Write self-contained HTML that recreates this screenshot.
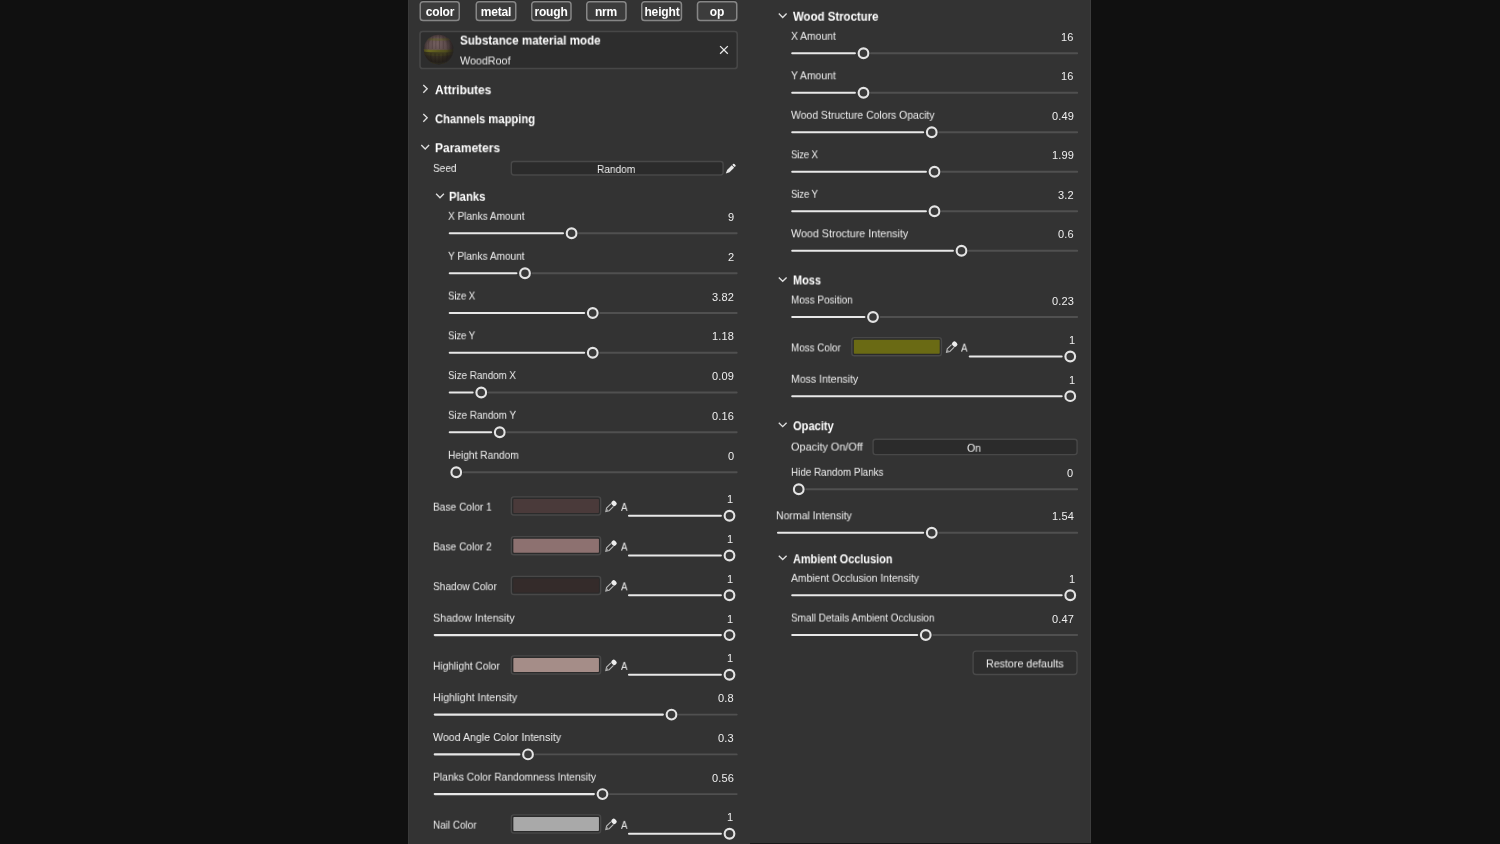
<!DOCTYPE html><html><head><meta charset="utf-8"><title>Substance material properties</title><style>

html,body{margin:0;padding:0;background:#101010;}
body{width:1500px;height:844px;position:relative;overflow:hidden;font-family:"Liberation Sans",sans-serif;font-size:11px;color:#efefef;}
#p{position:absolute;left:408px;top:0;width:683.3px;height:844px;background:#333333;box-shadow:inset 1px 0 0 #3a3a3a,inset -1px 0 0 #3d3d3d;}
#bl{position:absolute;left:750px;top:843px;width:341.3px;height:1px;background:#181818;}
.t{position:absolute;white-space:nowrap;transform-origin:0 50%;line-height:14px;height:14px;will-change:transform;}
.b{font-weight:bold;font-size:12px;color:#ffffff;}
.ic{position:absolute;overflow:visible;}
.tr{stroke:#505050;stroke-width:1.9;stroke-linecap:round;fill:none}
.fl{stroke:#e8e8e8;stroke-width:2.1;stroke-linecap:round;fill:none}
.hd{stroke:#e4e4e4;stroke-width:2.1;fill:#393939}
.ch{stroke:#dedede;stroke-width:1.35;fill:none}
.btn{stroke:#868686;stroke-width:1.5;fill:#3c3c3c}
.mt{stroke:#474747;stroke-width:1.6;fill:#2d2d2d}
.bx{stroke:#484848;stroke-width:1.4;fill:#2b2b2b}
.rb{stroke:#4a4a4a;stroke-width:1.3;fill:#2e2e2e}

</style></head><body><div id="p"></div><div id="bl"></div>
<svg class="ic" style="left:0;top:0" width="1500" height="844" viewBox="0 0 1500 844"><rect x="421.5" y="0" width="36.5" height="0.55" fill="#202020"/>
<rect class="btn" x="420.25" y="1.75" width="39.0" height="18.7" rx="2.8"/>
<rect x="477.5" y="0" width="37.0" height="0.55" fill="#202020"/>
<rect class="btn" x="476.25" y="1.75" width="39.5" height="18.7" rx="2.8"/>
<rect x="533" y="0" width="36.75" height="0.55" fill="#202020"/>
<rect class="btn" x="531.75" y="1.75" width="39.25" height="18.7" rx="2.8"/>
<rect x="588" y="0" width="36.75" height="0.55" fill="#202020"/>
<rect class="btn" x="586.75" y="1.75" width="39.25" height="18.7" rx="2.8"/>
<rect x="643" y="0" width="37.200000000000045" height="0.55" fill="#202020"/>
<rect class="btn" x="641.75" y="1.75" width="39.700000000000045" height="18.7" rx="2.8"/>
<rect x="698.75" y="0" width="36.75" height="0.55" fill="#202020"/>
<rect class="btn" x="697.5" y="1.75" width="39.25" height="18.7" rx="2.8"/>
<rect class="mt" x="420.00" y="31.50" width="317.20" height="37.00" rx="2.6"/>
<path d="M720.1 46.1l7.7 7.7m0 -7.7l-7.7 7.7" stroke="#e8e8e8" stroke-width="1.3" fill="none"/>
<path class="ch" d="M423.30 84.90l3.9 3.9l-3.9 3.9"/>
<path class="ch" d="M423.30 113.90l3.9 3.9l-3.9 3.9"/>
<path class="ch" d="M421.30 145.10l3.9 3.9l3.9 -3.9"/>
<rect class="bx" x="511.35" y="161.50" width="211.75" height="13.50" rx="2.4"/>
<g transform="translate(725.7 163.7) rotate(45 5 5)"><rect x="3.3" y="-0.9" width="3.4" height="2.1" rx="1" fill="#f0f0f0"/><path d="M3.3 1.8H6.7V8.4L5 11.9L3.3 8.4Z" fill="#e8e8e8"/></g>
<path class="ch" d="M436.10 193.80l3.9 3.9l3.9 -3.9"/>
<path class="tr" d="M579.10 233.25H736.70"/>
<path class="fl" d="M449.75 233.25H563.00"/>
<circle class="hd" cx="571.60" cy="233.25" r="4.85"/>
<path class="tr" d="M532.50 273.25H736.70"/>
<path class="fl" d="M449.75 273.25H516.40"/>
<circle class="hd" cx="525.00" cy="273.25" r="4.85"/>
<path class="tr" d="M600.25 313.00H736.70"/>
<path class="fl" d="M449.75 313.00H584.15"/>
<circle class="hd" cx="592.75" cy="313.00" r="4.85"/>
<path class="tr" d="M600.25 352.75H736.70"/>
<path class="fl" d="M449.75 352.75H584.15"/>
<circle class="hd" cx="592.75" cy="352.75" r="4.85"/>
<path class="tr" d="M488.75 392.50H736.70"/>
<path class="fl" d="M449.75 392.50H472.65"/>
<circle class="hd" cx="481.25" cy="392.50" r="4.85"/>
<path class="tr" d="M507.25 432.25H736.70"/>
<path class="fl" d="M449.75 432.25H491.15"/>
<circle class="hd" cx="499.75" cy="432.25" r="4.85"/>
<path class="tr" d="M463.75 472.25H736.70"/>
<circle class="hd" cx="456.25" cy="472.25" r="4.85"/>
<rect class="bx" x="511.35" y="496.90" width="89.30" height="18.10" rx="2.6"/>
<rect x="513.35" y="498.90" width="85.60" height="14.20" rx="0.8" fill="#4a3a3a"/>
<g transform="translate(604.20 501.10) rotate(45 6 6)"><rect x="3.3" y="-1.7" width="5.4" height="4.7" rx="2" fill="#ededed"/><path d="M4.15 3.2V9.3L6 12.2L7.85 9.3V3.2" fill="none" stroke="#b6b6b6" stroke-width="1.1"/><path d="M4.9 9.6L6 12L7.1 9.6Z" fill="#a4a4a4"/></g>
<path class="fl" d="M629.00 515.75H720.90"/>
<circle class="hd" cx="729.50" cy="515.75" r="4.85"/>
<rect class="bx" x="511.35" y="536.65" width="89.30" height="18.10" rx="2.6"/>
<rect x="513.35" y="538.65" width="85.60" height="14.20" rx="0.8" fill="#8d7170"/>
<g transform="translate(604.20 540.85) rotate(45 6 6)"><rect x="3.3" y="-1.7" width="5.4" height="4.7" rx="2" fill="#ededed"/><path d="M4.15 3.2V9.3L6 12.2L7.85 9.3V3.2" fill="none" stroke="#b6b6b6" stroke-width="1.1"/><path d="M4.9 9.6L6 12L7.1 9.6Z" fill="#a4a4a4"/></g>
<path class="fl" d="M629.00 555.50H720.90"/>
<circle class="hd" cx="729.50" cy="555.50" r="4.85"/>
<rect class="bx" x="511.35" y="576.40" width="89.30" height="18.10" rx="2.6"/>
<rect x="513.35" y="578.40" width="85.60" height="14.20" rx="0.8" fill="#342b2a"/>
<g transform="translate(604.20 580.60) rotate(45 6 6)"><rect x="3.3" y="-1.7" width="5.4" height="4.7" rx="2" fill="#ededed"/><path d="M4.15 3.2V9.3L6 12.2L7.85 9.3V3.2" fill="none" stroke="#b6b6b6" stroke-width="1.1"/><path d="M4.9 9.6L6 12L7.1 9.6Z" fill="#a4a4a4"/></g>
<path class="fl" d="M629.00 595.25H720.90"/>
<circle class="hd" cx="729.50" cy="595.25" r="4.85"/>
<path class="fl" d="M434.75 635.10H720.90"/>
<circle class="hd" cx="729.50" cy="635.10" r="4.85"/>
<rect class="bx" x="511.35" y="655.90" width="89.30" height="18.10" rx="2.6"/>
<rect x="513.35" y="657.90" width="85.60" height="14.20" rx="0.8" fill="#a58d88"/>
<g transform="translate(604.20 660.10) rotate(45 6 6)"><rect x="3.3" y="-1.7" width="5.4" height="4.7" rx="2" fill="#ededed"/><path d="M4.15 3.2V9.3L6 12.2L7.85 9.3V3.2" fill="none" stroke="#b6b6b6" stroke-width="1.1"/><path d="M4.9 9.6L6 12L7.1 9.6Z" fill="#a4a4a4"/></g>
<path class="fl" d="M629.00 674.75H720.90"/>
<circle class="hd" cx="729.50" cy="674.75" r="4.85"/>
<path class="tr" d="M679.00 714.60H736.70"/>
<path class="fl" d="M434.75 714.60H662.90"/>
<circle class="hd" cx="671.50" cy="714.60" r="4.85"/>
<path class="tr" d="M535.50 754.40H736.70"/>
<path class="fl" d="M434.75 754.40H519.40"/>
<circle class="hd" cx="528.00" cy="754.40" r="4.85"/>
<path class="tr" d="M610.00 794.10H736.70"/>
<path class="fl" d="M434.75 794.10H593.90"/>
<circle class="hd" cx="602.50" cy="794.10" r="4.85"/>
<rect class="bx" x="511.35" y="814.90" width="89.30" height="18.10" rx="2.6"/>
<rect x="513.35" y="816.90" width="85.60" height="14.20" rx="0.8" fill="#a9a9a9"/>
<g transform="translate(604.20 819.10) rotate(45 6 6)"><rect x="3.3" y="-1.7" width="5.4" height="4.7" rx="2" fill="#ededed"/><path d="M4.15 3.2V9.3L6 12.2L7.85 9.3V3.2" fill="none" stroke="#b6b6b6" stroke-width="1.1"/><path d="M4.9 9.6L6 12L7.1 9.6Z" fill="#a4a4a4"/></g>
<path class="fl" d="M629.00 833.75H720.90"/>
<circle class="hd" cx="729.50" cy="833.75" r="4.85"/>
<path class="ch" d="M778.80 13.60l3.9 3.9l3.9 -3.9"/>
<path class="tr" d="M871.00 53.25H1077.20"/>
<path class="fl" d="M792.25 53.25H854.90"/>
<circle class="hd" cx="863.50" cy="53.25" r="4.85"/>
<path class="tr" d="M871.00 92.75H1077.20"/>
<path class="fl" d="M792.25 92.75H854.90"/>
<circle class="hd" cx="863.50" cy="92.75" r="4.85"/>
<path class="tr" d="M939.25 132.25H1077.20"/>
<path class="fl" d="M792.25 132.25H923.15"/>
<circle class="hd" cx="931.75" cy="132.25" r="4.85"/>
<path class="tr" d="M942.00 171.75H1077.20"/>
<path class="fl" d="M792.25 171.75H925.90"/>
<circle class="hd" cx="934.50" cy="171.75" r="4.85"/>
<path class="tr" d="M942.00 211.25H1077.20"/>
<path class="fl" d="M792.25 211.25H925.90"/>
<circle class="hd" cx="934.50" cy="211.25" r="4.85"/>
<path class="tr" d="M969.00 250.75H1077.20"/>
<path class="fl" d="M792.25 250.75H952.90"/>
<circle class="hd" cx="961.50" cy="250.75" r="4.85"/>
<path class="ch" d="M778.80 277.40l3.9 3.9l3.9 -3.9"/>
<path class="tr" d="M880.50 317.00H1077.20"/>
<path class="fl" d="M792.25 317.00H864.40"/>
<circle class="hd" cx="873.00" cy="317.00" r="4.85"/>
<rect class="bx" x="851.85" y="337.65" width="89.55" height="18.10" rx="2.6"/>
<rect x="853.85" y="339.65" width="85.85" height="14.20" rx="0.8" fill="#6a6a14"/>
<g transform="translate(944.90 341.85) rotate(45 6 6)"><rect x="3.3" y="-1.7" width="5.4" height="4.7" rx="2" fill="#ededed"/><path d="M4.15 3.2V9.3L6 12.2L7.85 9.3V3.2" fill="none" stroke="#b6b6b6" stroke-width="1.1"/><path d="M4.9 9.6L6 12L7.1 9.6Z" fill="#a4a4a4"/></g>
<path class="fl" d="M969.75 356.50H1061.65"/>
<circle class="hd" cx="1070.25" cy="356.50" r="4.85"/>
<path class="fl" d="M792.25 396.20H1061.65"/>
<circle class="hd" cx="1070.25" cy="396.20" r="4.85"/>
<path class="ch" d="M778.80 422.75l3.9 3.9l3.9 -3.9"/>
<rect class="bx" x="873.10" y="439.20" width="204.00" height="15.40" rx="2.6"/>
<path class="tr" d="M806.25 489.25H1077.20"/>
<circle class="hd" cx="798.75" cy="489.25" r="4.85"/>
<path class="tr" d="M939.25 532.75H1077.20"/>
<path class="fl" d="M778.00 532.75H923.15"/>
<circle class="hd" cx="931.75" cy="532.75" r="4.85"/>
<path class="ch" d="M778.80 555.65l3.9 3.9l3.9 -3.9"/>
<path class="fl" d="M792.25 595.25H1061.65"/>
<circle class="hd" cx="1070.25" cy="595.25" r="4.85"/>
<path class="tr" d="M933.25 635.00H1077.20"/>
<path class="fl" d="M792.25 635.00H917.15"/>
<circle class="hd" cx="925.75" cy="635.00" r="4.85"/>
<rect class="rb" x="973.10" y="651.10" width="103.90" height="23.40" rx="3"/></svg>
<svg class="ic" style="left:423px;top:34px" width="32" height="32" viewBox="0 0 32 32">
<defs><radialGradient id="g1" cx="0.42" cy="0.3" r="0.75"><stop offset="0" stop-color="#746060"/><stop offset="0.5" stop-color="#5a4949"/><stop offset="1" stop-color="#302827"/></radialGradient>
<radialGradient id="g2" cx="0.46" cy="0.44" r="0.56"><stop offset="0.55" stop-color="#1c1818" stop-opacity="0"/><stop offset="0.85" stop-color="#1c1818" stop-opacity="0.5"/><stop offset="1" stop-color="#242222" stop-opacity="0.92"/></radialGradient>
<linearGradient id="g3" x1="0" y1="0" x2="1" y2="0"><stop offset="0" stop-color="#77751f"/><stop offset="0.45" stop-color="#5d5b1e"/><stop offset="1" stop-color="#45431c"/></linearGradient>
<clipPath id="cp"><circle cx="15.6" cy="15.5" r="14.7"/></clipPath></defs>
<circle cx="15.6" cy="15.5" r="14.7" fill="url(#g1)"/>
<g clip-path="url(#cp)">
<path d="M7 2 Q5 9 5.5 15 M10 1 Q9 8 9.3 15 M13 0 L12.8 15 M16.5 0 L16.5 15 M20 0 Q20.6 8 20.3 15 M23.5 1 Q24.6 8 24.3 15 M26.5 3 Q28 9 27.6 15" stroke="#4a3a3a" stroke-width="0.9" fill="none" opacity="0.6"/>
<path d="M0 3.4 Q15.6 5.6 32 3.4 L32 5.6 Q15.6 8 0 5.6 Z" fill="#5f5e24" opacity="0.55"/>
<path d="M0 16 Q15.6 17.4 32 16 L32 33 L0 33 Z" fill="#2f2b1b" opacity="0.8"/>
<path d="M0 15.2 Q15.6 16.4 32 15.2 L32 17.8 Q15.6 19.2 0 17.8 Z" fill="url(#g3)" opacity="0.95"/>
<path d="M0 17.8 Q15.6 19.2 32 17.8 L32 21 Q15.6 23 0 21 Z" fill="#44421c" opacity="0.6"/>
<path d="M8 19 Q7 24 9 29 M12 19.5 L12.5 30 M16 20 L16 31 M20 19.5 L19.6 30 M24 19 Q25 24 23 29" stroke="#241f14" stroke-width="0.8" fill="none" opacity="0.55"/>
<path d="M6 27.6 Q15.6 30.4 25 27.6 L25 29 Q15.6 31.8 6 29 Z" fill="#55531c" opacity="0.7"/>
</g>
<circle cx="15.6" cy="15.5" r="14.9" fill="url(#g2)"/></svg>
<div class="t b" style="top:4px;left:339.75px;width:200px;text-align:center;letter-spacing:-0.15px;transform:translateY(0.80px);">color</div>
<div class="t b" style="top:4px;left:396.0px;width:200px;text-align:center;letter-spacing:-0.15px;transform:translateY(0.80px);">metal</div>
<div class="t b" style="top:4px;left:451.375px;width:200px;text-align:center;letter-spacing:-0.15px;transform:translateY(0.80px);">rough</div>
<div class="t b" style="top:4px;left:506.375px;width:200px;text-align:center;letter-spacing:-0.15px;transform:translateY(0.80px);">nrm</div>
<div class="t b" style="top:4px;left:561.6px;width:200px;text-align:center;letter-spacing:-0.15px;transform:translateY(0.80px);">height</div>
<div class="t b" style="top:4px;left:617.125px;width:200px;text-align:center;letter-spacing:-0.15px;transform:translateY(0.80px);">op</div>
<div class="t b" style="top:33px;left:460.2px;transform:translateY(0.60px) scaleX(0.9667);">Substance material mode</div>
<div class="t" style="top:53px;left:459.7px;transform:translateY(0.50px) scaleX(0.9753);">WoodRoof</div>
<div class="t b" style="top:83px;left:435px;transform:translateY(0.20px) scaleX(0.9926);">Attributes</div>
<div class="t b" style="top:112px;left:435px;transform:translateY(0.20px) scaleX(0.9316);">Channels mapping</div>
<div class="t b" style="top:141px;left:435px;transform:translateY(0.20px) scaleX(0.9940);">Parameters</div>
<div class="t" style="top:160px;left:433.2px;transform:translateY(0.90px) scaleX(0.9182);">Seed</div>
<div class="t" style="top:162px;left:597.0px;transform:translateY(0.00px) scaleX(0.9188);">Random</div>
<div class="t b" style="top:189px;left:448.9px;transform:translateY(0.80px) scaleX(0.9405);">Planks</div>
<div class="t" style="top:208px;left:448px;transform:translateY(0.80px) scaleX(0.9131);">X Planks Amount</div>
<div class="t" style="top:209px;right:766.1px;letter-spacing:0.15px;transform:translateY(0.75px);">9</div>
<div class="t" style="top:248px;left:448px;transform:translateY(0.80px) scaleX(0.9153);">Y Planks Amount</div>
<div class="t" style="top:249px;right:766.1px;letter-spacing:0.15px;transform:translateY(0.75px);">2</div>
<div class="t" style="top:288px;left:448px;letter-spacing:-0.203px;transform:translateY(0.55px) scaleX(0.8800);">Size X</div>
<div class="t" style="top:289px;right:766.1px;letter-spacing:0.15px;transform:translateY(0.50px);">3.82</div>
<div class="t" style="top:328px;left:448px;letter-spacing:-0.166px;transform:translateY(0.30px) scaleX(0.8800);">Size Y</div>
<div class="t" style="top:329px;right:766.1px;letter-spacing:0.15px;transform:translateY(0.25px);">1.18</div>
<div class="t" style="top:368px;left:448px;transform:translateY(0.05px) scaleX(0.8896);">Size Random X</div>
<div class="t" style="top:369px;right:766.1px;letter-spacing:0.15px;transform:translateY(0.00px);">0.09</div>
<div class="t" style="top:407px;left:448px;transform:translateY(0.80px) scaleX(0.8920);">Size Random Y</div>
<div class="t" style="top:408px;right:766.1px;letter-spacing:0.15px;transform:translateY(0.75px);">0.16</div>
<div class="t" style="top:447px;left:448px;transform:translateY(0.80px) scaleX(0.9256);">Height Random</div>
<div class="t" style="top:448px;right:766.1px;letter-spacing:0.15px;transform:translateY(0.75px);">0</div>
<div class="t" style="top:499px;left:433.25px;transform:translateY(0.65px) scaleX(0.9238);">Base Color 1</div>
<div class="t" style="top:499px;left:620.9px;transform:translateY(0.85px) scaleX(0.8851);">A</div>
<div class="t" style="top:492px;right:766.4px;letter-spacing:0.15px;transform:translateY(0.15px);">1</div>
<div class="t" style="top:539px;left:433.25px;transform:translateY(0.40px) scaleX(0.9238);">Base Color 2</div>
<div class="t" style="top:539px;left:620.9px;transform:translateY(0.60px) scaleX(0.8851);">A</div>
<div class="t" style="top:531px;right:766.4px;letter-spacing:0.15px;transform:translateY(0.90px);">1</div>
<div class="t" style="top:579px;left:433.25px;transform:translateY(0.15px) scaleX(0.9227);">Shadow Color</div>
<div class="t" style="top:579px;left:620.9px;transform:translateY(0.35px) scaleX(0.8851);">A</div>
<div class="t" style="top:571px;right:766.4px;letter-spacing:0.15px;transform:translateY(0.65px);">1</div>
<div class="t" style="top:610px;left:433.25px;transform:translateY(0.65px) scaleX(0.9758);">Shadow Intensity</div>
<div class="t" style="top:611px;right:766.4px;letter-spacing:0.15px;transform:translateY(0.60px);">1</div>
<div class="t" style="top:658px;left:433.25px;transform:translateY(0.65px) scaleX(0.9251);">Highlight Color</div>
<div class="t" style="top:658px;left:620.9px;transform:translateY(0.85px) scaleX(0.8851);">A</div>
<div class="t" style="top:651px;right:766.4px;letter-spacing:0.15px;transform:translateY(0.15px);">1</div>
<div class="t" style="top:690px;left:433.25px;transform:translateY(0.15px) scaleX(0.9703);">Highlight Intensity</div>
<div class="t" style="top:691px;right:766.1px;letter-spacing:0.15px;transform:translateY(0.10px);">0.8</div>
<div class="t" style="top:729px;left:433.25px;transform:translateY(0.95px) scaleX(0.9662);">Wood Angle Color Intensity</div>
<div class="t" style="top:730px;right:766.1px;letter-spacing:0.15px;transform:translateY(0.90px);">0.3</div>
<div class="t" style="top:769px;left:433.25px;transform:translateY(0.65px) scaleX(0.9354);">Planks Color Randomness Intensity</div>
<div class="t" style="top:770px;right:766.1px;letter-spacing:0.15px;transform:translateY(0.60px);">0.56</div>
<div class="t" style="top:817px;left:433.25px;transform:translateY(0.65px) scaleX(0.9007);">Nail Color</div>
<div class="t" style="top:817px;left:620.9px;transform:translateY(0.85px) scaleX(0.8851);">A</div>
<div class="t" style="top:810px;right:766.4px;letter-spacing:0.15px;transform:translateY(0.15px);">1</div>
<div class="t b" style="top:9px;left:792.5px;transform:translateY(0.75px) scaleX(0.9523);">Wood Strocture</div>
<div class="t" style="top:28px;left:790.75px;transform:translateY(0.80px) scaleX(0.9381);">X Amount</div>
<div class="t" style="top:29px;right:426.29999999999995px;letter-spacing:0.15px;transform:translateY(0.75px);">16</div>
<div class="t" style="top:68px;left:790.75px;transform:translateY(0.30px) scaleX(0.9421);">Y Amount</div>
<div class="t" style="top:69px;right:426.29999999999995px;letter-spacing:0.15px;transform:translateY(0.25px);">16</div>
<div class="t" style="top:107px;left:790.75px;transform:translateY(0.80px) scaleX(0.9477);">Wood Structure Colors Opacity</div>
<div class="t" style="top:108px;right:426.29999999999995px;letter-spacing:0.15px;transform:translateY(0.75px);">0.49</div>
<div class="t" style="top:147px;left:790.75px;letter-spacing:-0.254px;transform:translateY(0.30px) scaleX(0.8800);">Size X</div>
<div class="t" style="top:148px;right:426.29999999999995px;letter-spacing:0.15px;transform:translateY(0.25px);">1.99</div>
<div class="t" style="top:186px;left:790.75px;letter-spacing:-0.217px;transform:translateY(0.80px) scaleX(0.8800);">Size Y</div>
<div class="t" style="top:187px;right:426.29999999999995px;letter-spacing:0.15px;transform:translateY(0.75px);">3.2</div>
<div class="t" style="top:226px;left:790.75px;transform:translateY(0.30px) scaleX(0.9751);">Wood Strocture Intensity</div>
<div class="t" style="top:227px;right:426.29999999999995px;letter-spacing:0.15px;transform:translateY(0.25px);">0.6</div>
<div class="t b" style="top:273px;left:792.5px;transform:translateY(0.50px) scaleX(0.9124);">Moss</div>
<div class="t" style="top:292px;left:790.75px;transform:translateY(0.55px) scaleX(0.9017);">Moss Position</div>
<div class="t" style="top:293px;right:426.29999999999995px;letter-spacing:0.15px;transform:translateY(0.50px);">0.23</div>
<div class="t" style="top:340px;left:790.75px;transform:translateY(0.40px) scaleX(0.8944);">Moss Color</div>
<div class="t" style="top:340px;left:961.4px;transform:translateY(0.60px) scaleX(0.8851);">A</div>
<div class="t" style="top:332px;right:425.0999999999999px;letter-spacing:0.15px;transform:translateY(0.90px);">1</div>
<div class="t" style="top:371px;left:790.75px;transform:translateY(0.75px) scaleX(0.9564);">Moss Intensity</div>
<div class="t" style="top:372px;right:425.0999999999999px;letter-spacing:0.15px;transform:translateY(0.70px);">1</div>
<div class="t b" style="top:419px;left:792.5px;transform:translateY(0.20px) scaleX(0.9258);">Opacity</div>
<div class="t" style="top:439px;left:790.75px;transform:translateY(0.60px) scaleX(0.9888);">Opacity On/Off</div>
<div class="t" style="top:440px;left:967.4px;transform:translateY(0.80px) scaleX(0.9532);">On</div>
<div class="t" style="top:464px;left:790.75px;transform:translateY(0.80px) scaleX(0.8951);">Hide Random Planks</div>
<div class="t" style="top:465px;right:426.29999999999995px;letter-spacing:0.15px;transform:translateY(0.75px);">0</div>
<div class="t" style="top:508px;left:776.25px;transform:translateY(0.30px) scaleX(0.9530);">Normal Intensity</div>
<div class="t" style="top:509px;right:426.29999999999995px;letter-spacing:0.15px;transform:translateY(0.25px);">1.54</div>
<div class="t b" style="top:552px;left:792.5px;transform:translateY(0.30px) scaleX(0.9098);">Ambient Occlusion</div>
<div class="t" style="top:570px;left:790.75px;transform:translateY(0.80px) scaleX(0.9430);">Ambient Occlusion Intensity</div>
<div class="t" style="top:571px;right:425.0999999999999px;letter-spacing:0.15px;transform:translateY(0.75px);">1</div>
<div class="t" style="top:610px;left:790.75px;transform:translateY(0.55px) scaleX(0.9063);">Small Details Ambient Occlusion</div>
<div class="t" style="top:611px;right:426.29999999999995px;letter-spacing:0.15px;transform:translateY(0.50px);">0.47</div>
<div class="t" style="top:656px;left:985.5px;transform:translateY(0.40px) scaleX(0.9699);">Restore defaults</div>
</body></html>
